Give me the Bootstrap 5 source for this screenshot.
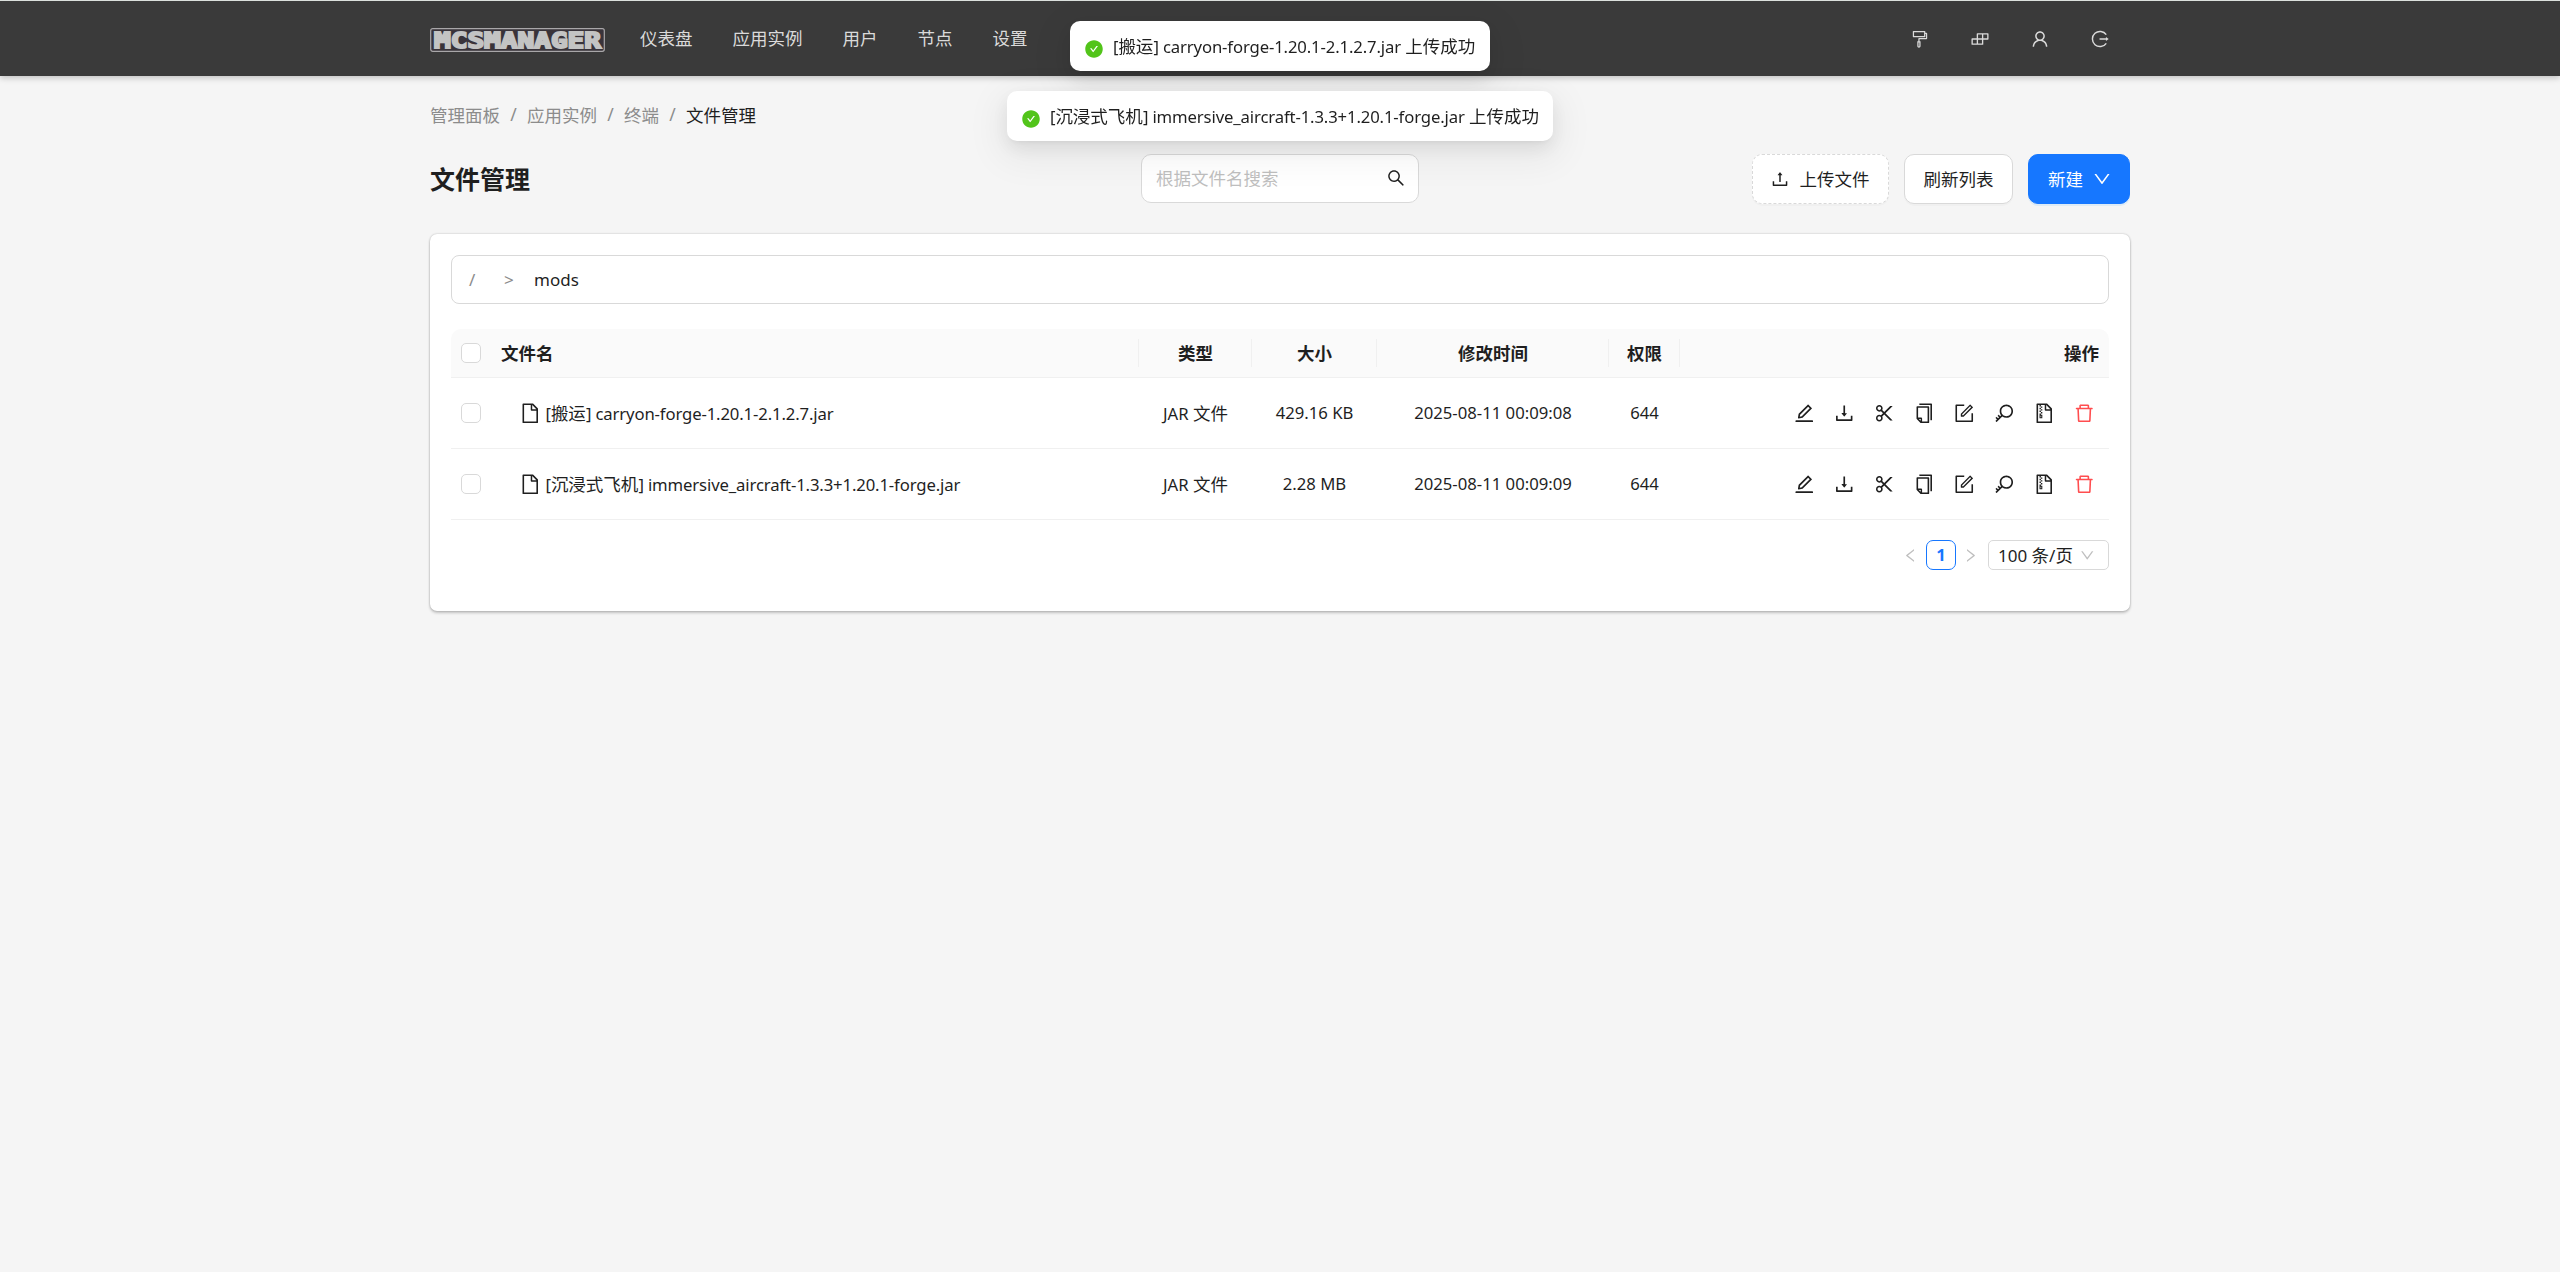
<!DOCTYPE html>
<html lang="zh-CN">
<head>
<meta charset="utf-8">
<meta name="viewport" content="width=device-width, initial-scale=1">
<title>文件管理 - MCSManager</title>
<link href="https://cdn.jsdelivr.net/npm/bootstrap@5.3.0/dist/css/bootstrap.min.css" rel="stylesheet">
<style>
  :root { --ink: #1f1f1f; --line: #d9d9d9; }
  body { background: #f5f5f5; color: var(--ink); font: 400 17.5px/27.5px "Noto Sans CJK SC", "Noto Sans", sans-serif; min-height: 1272px; }
  .latin { font-family: "Noto Sans", "Noto Sans CJK SC", sans-serif; font-size: 16.7px; }
  .snug .latin { letter-spacing: -.13px; }
  .ico { width: 1em; height: 1em; fill: currentColor; flex: none; display: block; }
  .page-width { width: 1700px; margin: 0 auto; }
  .topbar { height: 76px; background: #3a3a3a; border-top: 1px solid #dbe0dd; box-shadow: 0 2px 6px rgba(0,0,0,.22); color: #dadada; }
  .logo { width: 175px; height: 24px; margin: 2px 35px 0 0; display: block; overflow: visible; }
  .topbar .nav { gap: 40px; margin-bottom: 2px; }
  .topbar .nav-link { color: #dadada; padding: 0; }
  .tools { gap: 40px; font-size: 20px; padding-right: 20px; }
  .breadcrumb { margin: 25px 0 0; --bs-breadcrumb-item-padding-x: 10px; --bs-breadcrumb-divider-color: #8c8c8c; --bs-breadcrumb-item-active-color: #1f1f1f; color: #8c8c8c; }
  .breadcrumb-item + .breadcrumb-item::before { font-family: "Noto Sans"; width: 27px; text-align: center; padding-left: 0; padding-right: 0; }
  .breadcrumb-item + .breadcrumb-item { padding-left: 0; }
  .toolbar { margin-top: 25px; height: 50px; display: grid; grid-template-columns: 1fr 278px 1fr; }
  .toolbar h1 { font-size: 25px; line-height: 1.5; font-weight: 700; margin: 0; }
  .finder { height: 49px; background: #fff; border: 1px solid var(--line); border-radius: 10px; padding: 0 12px 0 14px; align-self: start; }
  .finder input { border: 0; outline: 0; padding: 0; background: none; width: 190px; font: inherit; }
  .finder input::placeholder { color: #bfbfbf; opacity: 1; }
  .finder .ico { font-size: 20px; }
  .actions { gap: 15px; }
  .tool-btn { --bs-btn-font-size: 17.5px; --bs-btn-line-height: 26px; --bs-btn-padding-x: 18.5px; --bs-btn-padding-y: 11px; --bs-btn-border-radius: 10px; --bs-btn-border-color: #d9d9d9; --bs-btn-bg: #fff; --bs-btn-color: #1f1f1f; height: 50px; display: flex; align-items: center; gap: 10px; box-shadow: 0 2px 0 rgba(0,0,0,.02); }
  .tool-btn .ico { font-size: 20px; }
  .tool-btn.dashed { border-style: dashed; padding-left: 16.5px; padding-right: 18.5px; }
  .tool-btn.main { --bs-btn-bg: #1677ff; --bs-btn-border-color: #1677ff; --bs-btn-color: #fff; padding-left: 19px; padding-right: 17px; gap: 9px; box-shadow: 0 2px 0 rgba(5,145,255,.1); }
  .panel { margin-top: 30px; height: 377px; border: 0; border-radius: 7px; padding: 21px; box-shadow: 0 0 2px rgba(0,0,0,.25), 0 2px 3px rgba(0,0,0,.2); }
  .path { height: 49px; border: 1px solid var(--line); border-radius: 8px; padding: 2px 0 0 17px; font-size: 17px; }
  .path span { color: #8c8c8c; width: 35px; }
  .path span + span { width: 30px; }
  .files { table-layout: fixed; width: 1658px; margin: 25px 0 0; --bs-table-color: #1f1f1f; --bs-table-bg: transparent; }
  .files th, .files td { padding: 0 10px; vertical-align: middle; text-align: center; border-bottom: 1px solid #f0f0f0; }
  .files th { height: 49px; background: #fafafa; font-weight: 700; }
  .files th:first-child { border-top-left-radius: 10px; }
  .files th:last-child { border-top-right-radius: 10px; }
  .files td { height: 71px; }
  .files .sep { background: linear-gradient(#f0f0f0,#f0f0f0) right center / 1px 28px no-repeat #fafafa; }
  .files .form-check-input { width: 20px; height: 20px; margin: 0; border: 1px solid var(--line); border-radius: 5px; display: block; }
  .files .name-cell { text-align: left; padding-left: 9px; }
  .entry { padding-left: 18px; gap: 4px; }
  .doc { font-size: 22.5px; }
  .acts { gap: 17.5px; font-size: 22.5px; justify-content: flex-end; padding-right: 4px; }
  .acts .del { color: #ff4d4f; }
  .pager { margin-top: 20px; height: 30px; }
  .pager .arrow { color: #bfbfbf; font-size: 17px; width: 17px; }
  .pager .next { transform: scaleX(-1); }
  .pager .now { width: 30px; height: 30px; border: 1px solid #1677ff; border-radius: 7px; color: #1677ff; font-weight: 700; margin: 0 6px 0 7px; }
  .pager .per { width: 121px; height: 30px; border: 1px solid var(--line); border-radius: 5px; margin-left: 9px; padding: 0 12.5px 0 9px; white-space: nowrap; }
  .pager .per .latin { font-size: 17px; }
  .pager .per .ico { color: #bfbfbf; font-size: 16.5px; }
  .notices { position: fixed; top: 21px; left: 0; right: 0; gap: 20px; }
  .notice { height: 50px; background: #fff; border-radius: 10px; padding: 0 14px; gap: 9px; white-space: nowrap; box-shadow: 0 7.5px 20px rgba(0,0,0,.08), 0 4px 7.5px -5px rgba(0,0,0,.12), 0 11px 35px 10px rgba(0,0,0,.05); }
  .notice .ico { color: #52c41a; font-size: 20px; margin-top: 5px; }
  .n1 { width: 420px; } .n2 { width: 546px; }
</style>
</head>
<body>
<svg class="d-none" aria-hidden="true">
  <symbol id="i-painter" viewBox="0 0 1024 1024"><path d="M840 192h-56v-72c0-13.300-10.700-24-24-24H168c-13.300 0-24 10.700-24 24v272c0 13.300 10.700 24 24 24h592c13.300 0 24-10.700 24-24V256h32v200H465c-22.100 0-40 17.900-40 40v136h-44c-4.400 0-8 3.600-8 8v228c0 .6.1 1.300.2 1.900-.1 2-.2 4.100-.2 6.100 0 46.400 37.600 84 84 84s84-37.600 84-84c0-2.100-.1-4.100-.2-6.100.1-.6.2-1.200.2-1.900V640c0-4.400-3.600-8-8-8h-44V520h351c22.100 0 40-17.900 40-40V232c0-22.100-17.900-40-40-40zM720 352H208V160h512v192zM477 876c0 11-9 20-20 20s-20-9-20-20V696h40v180z"/></symbol>
  <symbol id="i-build" viewBox="0 0 1024 1024"><path fill="none" stroke="currentColor" stroke-width="68" stroke-linejoin="round" d="M378 246H914V512H646V778H110V512H378ZM378 512H646V246M378 512V778M646 512H378"/></symbol>
  <symbol id="i-user" viewBox="0 0 1024 1024"><path d="M858.5 763.600a374 374 0 00-80.600-119.500 375.630 375.630 0 00-119.500-80.600c-.4-.2-.8-.3-1.200-.5C719.500 518 760 444.700 760 362c0-137-111-248-248-248S264 225 264 362c0 82.700 40.500 156 102.800 201.100-.4.2-.8.3-1.200.5-44.800 18.900-85 46-119.500 80.600a375.630 375.630 0 00-80.600 119.500A371.700 371.700 0 00136 901.800a8 8 0 008 8.200h60c4.400 0 7.900-3.500 8-7.800 2-77.200 33-149.500 87.800-204.300 56.700-56.700 132-87.900 212.200-87.900s155.500 31.200 212.200 87.900C779 752.700 810 825 812 902.200c.1 4.400 3.600 7.800 8 7.800h60a8 8 0 008-8.200c-1-47.800-10.900-94.300-29.500-138.200zM512 534c-45.900 0-89.100-17.900-121.600-50.400S340 407.900 340 362c0-45.900 17.900-89.100 50.400-121.600S466.100 190 512 190s89.100 17.900 121.600 50.400S684 316.100 684 362c0 45.900-17.900 89.100-50.400 121.600S557.900 534 512 534z"/></symbol>
  <symbol id="i-logout" viewBox="0 0 1024 1024"><path fill="none" stroke="currentColor" stroke-width="74" d="M832 292A388 388 0 1 0 832 732M488 512H830"/><path d="M815 406L956 512L815 618Z"/></symbol>
  <symbol id="i-file" viewBox="0 0 1024 1024"><path d="M854.600 288.600L639.400 73.400c-6-6-14.100-9.400-22.600-9.400H192c-17.700 0-32 14.300-32 32v832c0 17.700 14.300 32 32 32h640c17.700 0 32-14.300 32-32V311.300c0-8.500-3.400-16.700-9.400-22.700zM790.200 326H602V137.800L790.200 326zm1.800 562H232V136h302v216a42 42 0 0042 42h216v494z"/></symbol>
  <symbol id="i-edit" viewBox="0 0 1024 1024"><path d="M257.700 752c2 0 4-.2 6-.5L431.900 722c2-.4 3.900-1.300 5.300-2.800l423.900-423.900a9.960 9.960 0 000-14.100L694.900 114.900c-1.900-1.900-4.400-2.900-7.100-2.900s-5.200 1-7.100 2.900L256.800 538.800c-1.500 1.500-2.400 3.300-2.800 5.300l-29.500 168.200a33.500 33.500 0 009.400 29.800c6.600 6.400 14.900 9.900 23.800 9.900zm67.400-174.400L687.800 215l73.300 73.300-362.700 362.600-88.900 15.700 15.600-89zM880 836H144c-17.700 0-32 14.300-32 32v36c0 4.400 3.600 8 8 8h784c4.400 0 8-3.600 8-8v-36c0-17.700-14.300-32-32-32z"/></symbol>
  <symbol id="i-download" viewBox="0 0 1024 1024"><path d="M505.700 661a8 8 0 0012.600 0l112-141.700c4.100-5.200.4-12.900-6.300-12.900h-74.100V168c0-4.400-3.600-8-8-8h-60c-4.400 0-8 3.600-8 8v338.300H400c-6.700 0-10.400 7.700-6.300 12.900l112 141.800zM878 626h-60c-4.400 0-8 3.600-8 8v154H214V634c0-4.400-3.600-8-8-8h-60c-4.400 0-8 3.600-8 8v198c0 17.700 14.300 32 32 32h684c17.700 0 32-14.300 32-32V634c0-4.400-3.600-8-8-8z"/></symbol>
  <symbol id="i-upload" viewBox="0 0 1024 1024"><path d="M400 317.700h73.900V656c0 4.400 3.600 8 8 8h60c4.400 0 8-3.600 8-8V317.700H624c6.700 0 10.400-7.700 6.300-12.900L518.300 163a8 8 0 00-12.600 0l-112 141.700c-4.100 5.300-.4 13 6.300 13zM878 626h-60c-4.400 0-8 3.600-8 8v154H214V634c0-4.400-3.600-8-8-8h-60c-4.400 0-8 3.600-8 8v198c0 17.700 14.300 32 32 32h684c17.700 0 32-14.300 32-32V634c0-4.400-3.600-8-8-8z"/></symbol>
  <symbol id="i-cut" viewBox="0 0 1024 1024"><path d="M567.100 512l318.500-319.300c5-5 1.500-13.700-5.600-13.700h-90.500c-2.100 0-4.200.8-5.600 2.300l-273.300 274-90.200-90.500c12.500-22.100 19.700-47.600 19.700-74.800 0-83.900-68.100-152-152-152s-152 68.100-152 152 68.100 152 152 152c27.700 0 53.600-7.400 75.900-20.300l90 90.300-90.100 90.300A151.040 151.040 0 00288 582c-83.900 0-152 68.100-152 152s68.100 152 152 152 152-68.100 152-152c0-27.200-7.200-52.700-19.700-74.800l90.200-90.500 273.300 274c1.500 1.500 3.500 2.300 5.600 2.300H880c7.100 0 10.700-8.600 5.600-13.700L567.100 512zM288 370c-44.100 0-80-35.900-80-80s35.900-80 80-80 80 35.900 80 80-35.900 80-80 80zm0 444c-44.100 0-80-35.900-80-80s35.900-80 80-80 80 35.900 80 80-35.900 80-80 80z"/></symbol>
  <symbol id="i-copy" viewBox="0 0 1024 1024"><path d="M832 64H296c-4.400 0-8 3.600-8 8v56c0 4.400 3.600 8 8 8h496v688c0 4.400 3.600 8 8 8h56c4.400 0 8-3.600 8-8V96c0-17.700-14.300-32-32-32zM704 192H192c-17.700 0-32 14.300-32 32v530.700c0 8.500 3.400 16.600 9.400 22.600l173.300 173.300c2.200 2.200 4.700 4 7.400 5.500v1.900h4.200c3.500 1.300 7.200 2 11 2H704c17.700 0 32-14.300 32-32V224c0-17.700-14.300-32-32-32zM350 856.200L263.900 770H350v86.200zM664 888H414V746c0-22.100-17.900-40-40-40H232V264h432v624z"/></symbol>
  <symbol id="i-form" viewBox="0 0 1024 1024"><path d="M904 512h-56c-4.400 0-8 3.600-8 8v320H184V184h320c4.400 0 8-3.600 8-8v-56c0-4.400-3.600-8-8-8H144c-17.700 0-32 14.300-32 32v736c0 17.700 14.300 32 32 32h736c17.700 0 32-14.300 32-32V520c0-4.400-3.600-8-8-8z"/><path d="M355.900 534.900L354 653.800c-.1 8.900 7.100 16.200 16 16.200h.4l118-2.900c2-.1 4-.9 5.400-2.300l415.900-415c3.100-3.100 3.100-8.200 0-11.300L785.400 114.300c-1.600-1.600-3.600-2.300-5.700-2.300s-4.100.8-5.700 2.300l-415.800 415a8.300 8.300 0 00-2.300 5.600zm63.500 23.600L779.700 199l45.200 45.100-360.500 359.700-45.700 1.100.7-46.400z"/></symbol>
  <symbol id="i-key" viewBox="0 0 1024 1024"><path d="M608 112c-167.900 0-304 136.100-304 304 0 70.300 23.900 135 63.900 186.500l-41.100 41.100-62.300-62.300a8.150 8.150 0 00-11.400 0l-39.800 39.800a8.150 8.150 0 000 11.400l62.300 62.300-44.900 44.900-62.300-62.300a8.150 8.150 0 00-11.400 0l-39.800 39.800a8.150 8.150 0 000 11.400l62.300 62.300-65.300 65.300a8.030 8.030 0 000 11.300l42.300 42.300c3.100 3.100 8.200 3.100 11.300 0l253.600-253.600A304.060 304.060 0 00608 720c167.900 0 304-136.100 304-304S775.900 112 608 112zm161.200 465.200C726.200 620.300 668.900 644 608 644c-60.900 0-118.200-23.700-161.200-66.800-43.100-43-66.800-100.300-66.800-161.200 0-60.900 23.700-118.200 66.800-161.200 43-43.100 100.300-66.800 161.200-66.800 60.900 0 118.200 23.700 161.200 66.800 43.100 43 66.800 100.300 66.800 161.200 0 60.900-23.700 118.200-66.800 161.200z"/></symbol>
  <symbol id="i-zip" viewBox="0 0 1024 1024"><path d="M296 392h64v64h-64zm0 190v160h128V582h-64v-62h-64v62zm80 48v64h-32v-64h32zm-16-302h64v64h-64zm-64-64h64v64h-64zm64 192h64v64h-64zm0-256h64v64h-64zm494.600 88.600L639.400 73.400c-6-6-14.100-9.400-22.600-9.400H192c-17.700 0-32 14.300-32 32v832c0 17.700 14.300 32 32 32h640c17.700 0 32-14.300 32-32V311.300c0-8.500-3.400-16.700-9.400-22.700zM790.200 326H602V137.800L790.200 326zm1.800 562H232V136h64v64h64v-64h174v216a42 42 0 0042 42h216v494z"/></symbol>
  <symbol id="i-trash" viewBox="0 0 1024 1024"><path d="M360 184h-8c4.400 0 8-3.600 8-8v8h304v-8c0 4.400 3.600 8 8 8h-8v72h72v-80c0-35.300-28.700-64-64-64H352c-35.300 0-64 28.700-64 64v80h72v-72zm504 72H160c-17.700 0-32 14.300-32 32v32c0 4.400 3.600 8 8 8h60.400l24.700 523c1.600 34.100 29.800 61 63.900 61h454c34.200 0 62.300-26.800 63.900-61l24.700-523H888c4.400 0 8-3.600 8-8v-32c0-17.700-14.300-32-32-32zM731.300 840H292.700l-24.200-512h487l-24.200 512z"/></symbol>
  <symbol id="i-search" viewBox="0 0 1024 1024"><path d="M909.600 854.500L649.900 594.800C690.200 542.700 712 479 712 412c0-80.200-31.300-155.400-87.900-212.100-56.600-56.700-132-87.900-212.100-87.900s-155.500 31.300-212.100 87.900C143.200 256.500 112 331.800 112 412c0 80.100 31.300 155.500 87.900 212.100C256.500 680.800 331.800 712 412 712c67 0 130.600-21.800 182.700-62l259.700 259.600a8.200 8.200 0 0011.600 0l43.600-43.500a8.200 8.200 0 000-11.600zM570.400 570.400C528 612.700 471.800 636 412 636s-116-23.300-158.400-65.600C211.300 528 188 471.800 188 412s23.300-116.100 65.600-158.400C296 211.300 352.200 188 412 188s116.100 23.200 158.400 65.600S636 352.200 636 412s-23.300 116.100-65.600 158.400z"/></symbol>
  <symbol id="i-down" viewBox="0 0 1024 1024"><path d="M884 256h-75c-5.100 0-9.900 2.500-12.900 6.600L512 654.200 227.900 262.600c-3-4.100-7.800-6.600-12.900-6.600h-75c-6.500 0-10.300 7.400-6.500 12.700l352.600 486.100c12.800 17.600 39 17.600 51.700 0l352.600-486.100c3.900-5.300.1-12.700-6.400-12.700z"/></symbol>
  <symbol id="i-left" viewBox="0 0 1024 1024"><path d="M724 218.300V141c0-6.700-7.700-10.400-12.900-6.300L260.300 486.800a31.860 31.860 0 000 50.300l450.800 352.100c5.300 4.100 12.900.4 12.900-6.300v-77.300c0-4.900-2.300-9.600-6.100-12.600l-360-281 360-281.100c3.800-3 6.100-7.700 6.100-12.600z"/></symbol>
  <symbol id="i-check" viewBox="0 0 1024 1024"><path d="M512 64C264.600 64 64 264.600 64 512s200.600 448 448 448 448-200.600 448-448S759.400 64 512 64zm193.500 301.700l-210.600 292a31.800 31.800 0 01-51.700 0L318.500 484.900c-3.800-5.300 0-12.700 6.500-12.700h46.900c10.200 0 19.900 4.900 25.900 13.300l71.200 98.800 157.200-218c6-8.300 15.600-13.300 25.900-13.300H699c6.500 0 10.300 7.400 6.500 12.700z"/></symbol>
</svg>

<header class="topbar">
  <div class="page-width h-100 d-flex align-items-center">
    <svg class="logo" viewBox="0 0 175 24" role="img">
      <rect x=".7" y=".7" width="173.600" height="22.600" rx="2" fill="#39333a" stroke="#a9a7a9" stroke-width="1.200"/>
      <text x="4" y="20" textLength="167" lengthAdjust="spacingAndGlyphs" font-family="DejaVu Sans Mono, monospace" font-weight="700" font-size="22" fill="#c3c3c3" stroke="#c3c3c3" stroke-width="2" stroke-linejoin="miter">MCSMANAGER</text>
    </svg>
    <nav class="nav">
      <a class="nav-link">仪表盘</a><a class="nav-link">应用实例</a><a class="nav-link">用户</a><a class="nav-link">节点</a><a class="nav-link">设置</a>
    </nav>
    <div class="tools d-flex ms-auto">
      <svg class="ico"><use href="#i-painter"/></svg>
      <svg class="ico"><use href="#i-build"/></svg>
      <svg class="ico"><use href="#i-user"/></svg>
      <svg class="ico"><use href="#i-logout"/></svg>
    </div>
  </div>
</header>

<main class="page-width">
  <ol class="breadcrumb">
    <li class="breadcrumb-item">管理面板</li><li class="breadcrumb-item">应用实例</li><li class="breadcrumb-item">终端</li><li class="breadcrumb-item active">文件管理</li>
  </ol>

  <div class="toolbar align-items-center">
    <h1>文件管理</h1>
    <div class="finder d-flex align-items-center justify-content-between">
      <input type="text" placeholder="根据文件名搜索">
      <svg class="ico"><use href="#i-search"/></svg>
    </div>
    <div class="actions d-flex justify-content-end">
      <button class="btn tool-btn dashed"><svg class="ico"><use href="#i-upload"/></svg>上传文件</button>
      <button class="btn tool-btn">刷新列表</button>
      <button class="btn tool-btn main">新建<svg class="ico"><use href="#i-down"/></svg></button>
    </div>
  </div>

  <section class="card panel">
    <div class="path d-flex align-items-center latin"><span>/</span><span>&gt;</span><div>mods</div></div>

    <table class="table files">
      <colgroup><col style="width:41px"><col style="width:647px"><col style="width:113px"><col style="width:125px"><col style="width:232px"><col style="width:71px"><col></colgroup>
      <thead>
        <tr>
          <th><input class="form-check-input" type="checkbox"></th>
          <th class="name-cell sep">文件名</th><th class="sep">类型</th><th class="sep">大小</th><th class="sep">修改时间</th><th class="sep">权限</th><th class="text-end">操作</th>
        </tr>
      </thead>
      <tbody>
        <tr>
          <td><input class="form-check-input" type="checkbox"></td>
          <td class="name-cell"><div class="entry snug d-flex align-items-center"><svg class="ico doc"><use href="#i-file"/></svg><span><span class="latin">[</span>搬运<span class="latin">] carryon-forge-1.20.1-2.1.2.7.jar</span></span></div></td>
          <td><span class="latin">JAR </span>文件</td>
          <td class="latin">429.16 KB</td>
          <td class="latin">2025-08-11 00:09:08</td>
          <td class="latin">644</td>
          <td><div class="acts d-flex"><svg class="ico"><use href="#i-edit"/></svg><svg class="ico"><use href="#i-download"/></svg><svg class="ico"><use href="#i-cut"/></svg><svg class="ico"><use href="#i-copy"/></svg><svg class="ico"><use href="#i-form"/></svg><svg class="ico"><use href="#i-key"/></svg><svg class="ico"><use href="#i-zip"/></svg><svg class="ico del"><use href="#i-trash"/></svg></div></td>
        </tr>
        <tr>
          <td><input class="form-check-input" type="checkbox"></td>
          <td class="name-cell"><div class="entry snug d-flex align-items-center"><svg class="ico doc"><use href="#i-file"/></svg><span><span class="latin">[</span>沉浸式飞机<span class="latin">] immersive_aircraft-1.3.3+1.20.1-forge.jar</span></span></div></td>
          <td><span class="latin">JAR </span>文件</td>
          <td class="latin">2.28 MB</td>
          <td class="latin">2025-08-11 00:09:09</td>
          <td class="latin">644</td>
          <td><div class="acts d-flex"><svg class="ico"><use href="#i-edit"/></svg><svg class="ico"><use href="#i-download"/></svg><svg class="ico"><use href="#i-cut"/></svg><svg class="ico"><use href="#i-copy"/></svg><svg class="ico"><use href="#i-form"/></svg><svg class="ico"><use href="#i-key"/></svg><svg class="ico"><use href="#i-zip"/></svg><svg class="ico del"><use href="#i-trash"/></svg></div></td>
        </tr>
      </tbody>
    </table>

    <div class="pager d-flex align-items-center justify-content-end">
      <svg class="ico arrow"><use href="#i-left"/></svg>
      <span class="now latin d-flex align-items-center justify-content-center">1</span>
      <svg class="ico arrow next"><use href="#i-left"/></svg>
      <div class="per d-flex align-items-center justify-content-between"><span><span class="latin">100 </span>条<span class="latin">/</span>页</span><svg class="ico"><use href="#i-down"/></svg></div>
    </div>
  </section>
</main>

<div class="notices d-flex flex-column align-items-center">
  <div class="notice n1 snug d-flex align-items-center"><svg class="ico"><use href="#i-check"/></svg><span><span class="latin">[</span>搬运<span class="latin">] carryon-forge-1.20.1-2.1.2.7.jar </span>上传成功</span></div>
  <div class="notice n2 snug d-flex align-items-center"><svg class="ico"><use href="#i-check"/></svg><span><span class="latin">[</span>沉浸式飞机<span class="latin">] immersive_aircraft-1.3.3+1.20.1-forge.jar </span>上传成功</span></div>
</div>
<script src="https://cdn.jsdelivr.net/npm/bootstrap@5.3.0/dist/js/bootstrap.bundle.min.js"></script>
</body>
</html>
